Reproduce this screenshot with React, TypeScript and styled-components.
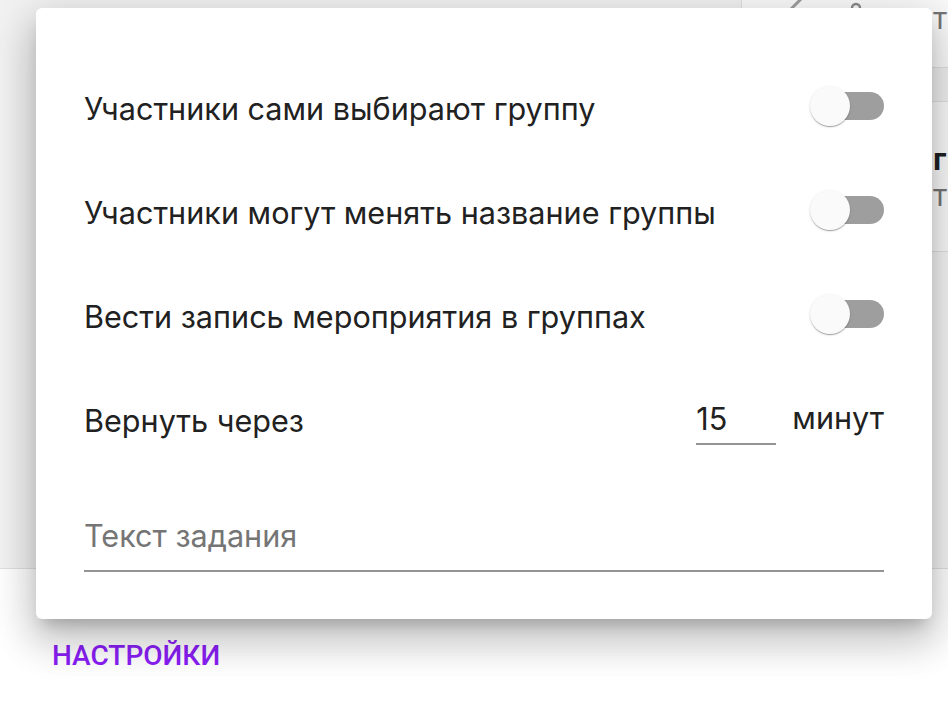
import React from "react";
import styled, { createGlobalStyle } from "styled-components";

const GlobalStyle = createGlobalStyle`
  html, body { margin: 0; padding: 0; background: #ffffff; }
  body { font-family: Inter, "Liberation Sans", Arial, sans-serif; }
  * { box-sizing: border-box; }
`;

const Page = styled.div`
  position: relative;
  width: 948px;
  height: 714px;
  overflow: hidden;
  background: #ffffff;
  display: flex;
  flex-direction: column;
`;

const Workspace = styled.div`
  display: flex;
  height: 569px;
  border-bottom: 1px solid #e0e0e0;
`;

const LeftPane = styled.div`
  flex: 1;
  background: #f2f2f2;
`;

const RightPane = styled.div`
  width: 207px;
  flex-shrink: 0;
  border-left: 1px solid #e0e0e0;
  background: #f5f5f5;
  display: flex;
  flex-direction: column;
`;

const PaneRow = styled.div<{ $h: number; $bg: string; $top?: boolean }>`
  height: ${(p) => p.$h}px;
  background: ${(p) => p.$bg};
  border-bottom: 1px solid #e0e0e0;
  display: flex;
  flex-direction: column;
  justify-content: ${(p) => (p.$top ? "flex-start" : "center")};
  padding-left: 191px;
  white-space: nowrap;
  position: relative;
`;

const TopIcons = styled.div`
  position: absolute;
  left: 44px;
  top: -6px;
  display: flex;
  gap: 40px;
`;

const PaneText = styled.div<{ $bold?: boolean }>`
  font-size: 30px;
  line-height: 36px;
  color: ${(p) => (p.$bold ? "#212121" : "#757575")};
  font-weight: ${(p) => (p.$bold ? 700 : 400)};
`;

const TabBar = styled.div`
  flex: 1;
  padding: 70px 0 0 52px;
`;

const Tab = styled.div`
  font-family: Roboto, "Liberation Sans", Arial, sans-serif;
  font-size: 28px;
  font-weight: 500;
  color: #8a1ef5;
  text-transform: uppercase;
  line-height: 33px;
`;

const Dialog = styled.div`
  position: absolute;
  left: 36px;
  top: 8px;
  width: 896px;
  background: #ffffff;
  border-radius: 6px;
  padding: 46px 48px 47px;
  box-shadow: 0px 11px 15px -7px rgba(0, 0, 0, 0.22),
    0px 24px 38px 3px rgba(0, 0, 0, 0.14), 0px 9px 46px 8px rgba(0, 0, 0, 0.12);
`;

const Row = styled.div`
  height: 104px;
  display: flex;
  align-items: center;
  justify-content: space-between;
`;

const Label = styled.div`
  font-size: 30.6px;
  line-height: 36px;
  color: #212121;
  padding-top: 5px;
`;

const SwitchRoot = styled.div`
  position: relative;
  width: 68px;
  height: 28px;
  border-radius: 14px;
  background: #9e9e9e;
  margin-top: -1px;
`;

const Thumb = styled.div`
  position: absolute;
  left: -6px;
  top: -6px;
  width: 40px;
  height: 40px;
  border-radius: 50%;
  background: #fafafa;
  box-shadow: 0px 2px 1px -1px rgba(0, 0, 0, 0.2),
    0px 1px 1px 0px rgba(0, 0, 0, 0.14), 0px 1px 3px 0px rgba(0, 0, 0, 0.12);
`;

const Toggle = () => (
  <SwitchRoot>
    <Thumb />
  </SwitchRoot>
);

const Duration = styled.div`
  display: flex;
  align-items: center;
  gap: 16px;
`;

const NumberField = styled.input`
  width: 80px;
  margin-top: 7px;
  border: none;
  border-bottom: 2px solid #949494;
  outline: none;
  background: transparent;
  font-family: inherit;
  font-size: 30.6px;
  line-height: 40px;
  height: 47px;
  padding: 0 0 5px 0;
  color: #212121;
`;

const Unit = styled.span`
  font-size: 30.6px;
  line-height: 36px;
  color: #212121;
`;

const TextField = styled.input`
  display: block;
  width: 100%;
  margin-top: 45px;
  border: none;
  border-bottom: 2px solid #949494;
  outline: none;
  background: transparent;
  font-family: inherit;
  font-size: 30.6px;
  line-height: 40px;
  height: 57px;
  padding: 0 0 15px 0;
  color: #212121;
  &::placeholder {
    color: #757575;
    opacity: 1;
  }
`;

export default function App() {
  const toggles = [
    "Участники сами выбирают группу",
    "Участники могут менять название группы",
    "Вести запись мероприятия в группах",
  ];
  return (
    <Page>
      <GlobalStyle />
      <Workspace>
        <LeftPane />
        <RightPane>
          <PaneRow $h={68} $bg="#fafafa" $top>
            <TopIcons>
              <svg width="20" height="20" viewBox="0 0 20 20">
                <path d="M2 18 L16 4" stroke="#9e9e9e" strokeWidth="3" />
              </svg>
              <svg width="20" height="20" viewBox="0 0 20 20">
                <circle cx="10" cy="14" r="4" fill="none" stroke="#8a8a8a" strokeWidth="2.5" />
              </svg>
            </TopIcons>
            <PaneText>тн</PaneText>
          </PaneRow>
          <PaneRow $h={34} $bg="#f0f0f0" />
          <PaneRow $h={150} $bg="#fafafa">
            <PaneText $bold>гр</PaneText>
            <PaneText>тн</PaneText>
          </PaneRow>
        </RightPane>
      </Workspace>
      <TabBar>
        <Tab>Настройки</Tab>
      </TabBar>
      <Dialog>
        {toggles.map((t) => (
          <Row key={t}>
            <Label>{t}</Label>
            <Toggle />
          </Row>
        ))}
        <Row>
          <Label>Вернуть через</Label>
          <Duration>
            <NumberField defaultValue="15" />
            <Unit>минут</Unit>
          </Duration>
        </Row>
        <TextField placeholder="Текст задания" />
      </Dialog>
    </Page>
  );
}
